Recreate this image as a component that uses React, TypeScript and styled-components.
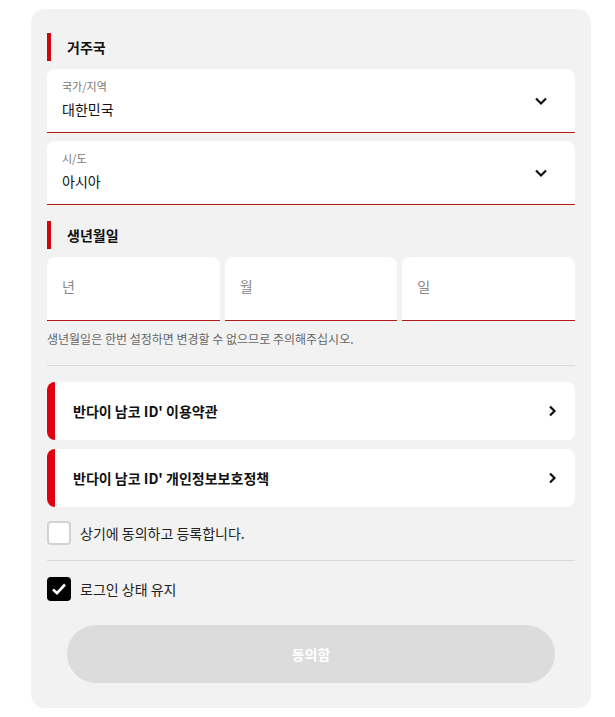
import React from "react";
import styled, { createGlobalStyle } from "styled-components";

const GlobalStyle = createGlobalStyle`
  body {
    margin: 0;
    background: #ffffff;
    font-family: "Noto Sans CJK KR", "Noto Sans", sans-serif;
    color: #111;
  }
`;

const Page = styled.div`
  padding: 9px 24px 10px 31px;
`;

const Card = styled.section`
  width: 560px;
  box-sizing: border-box;
  background: #f2f2f2;
  border-radius: 14px;
  padding: 24px 16px 25px;
  display: flex;
  flex-direction: column;
`;

const SectionTitle = styled.h2<{ $top?: number }>`
  margin: ${(p) => p.$top ?? 0}px 0 8px;
  height: 28px;
  display: flex;
  align-items: center;
  border-left: 4px solid #d0060f;
  padding-left: 16px;
  font-size: 14px;
  font-weight: 700;
  color: #111;
`;

const Select = styled.div`
  height: 64px;
  box-sizing: border-box;
  background: #fff;
  border-radius: 8px 8px 0 0;
  border-bottom: 1px solid #b51a1a;
  padding: 0 15px;
  display: flex;
  align-items: center;
  justify-content: space-between;
  & + & {
    margin-top: 8px;
  }
`;

const SelectText = styled.div`
  align-self: flex-start;
  padding-top: 9px;
  display: flex;
  flex-direction: column;
`;

const SelectLabel = styled.span`
  font-size: 11px;
  line-height: 16px;
  color: #777;
`;

const SelectValue = styled.span`
  font-size: 14px;
  line-height: 22px;
  margin-top: 4px;
  color: #111;
`;

const ChevronBox = styled.span`
  display: flex;
  margin-right: 12px;
`;

const DateRow = styled.div`
  display: grid;
  grid-template-columns: repeat(3, 1fr);
  gap: 5px;
`;

const DateField = styled.div`
  height: 64px;
  box-sizing: border-box;
  background: #fff;
  border-radius: 8px 8px 0 0;
  border-bottom: 1px solid #b51a1a;
  padding: 0 15px 5px;
  display: flex;
  align-items: center;
  font-size: 14px;
  color: #888;
`;

const Notice = styled.p`
  margin: 9px 0 0;
  font-size: 12px;
  line-height: 18px;
  color: #666;
`;

const Divider = styled.hr<{ $top: number; $bottom: number }>`
  border: none;
  border-top: 1px solid #dadada;
  margin: ${(p) => p.$top}px 0 ${(p) => p.$bottom}px;
`;

const TermsRow = styled.div`
  height: 58px;
  box-sizing: border-box;
  background: #fff;
  border-radius: 8px;
  border-left: 8px solid #e0000f;
  padding: 0 18px;
  display: flex;
  align-items: center;
  justify-content: space-between;
  font-size: 14px;
  font-weight: 700;
  color: #111;
  & + & {
    margin-top: 9px;
  }
`;

const CheckRow = styled.label<{ $top?: number }>`
  display: flex;
  align-items: center;
  gap: 9px;
  margin-top: ${(p) => p.$top ?? 0}px;
  font-size: 14px;
  line-height: 20px;
  color: #222;
`;

const CheckBox = styled.span<{ $checked?: boolean }>`
  width: 24px;
  height: 24px;
  box-sizing: border-box;
  border-radius: 4px;
  border: ${(p) => (p.$checked ? "none" : "2px solid #d2d2d2")};
  background: ${(p) => (p.$checked ? "#000" : "#fff")};
  display: flex;
  align-items: center;
  justify-content: center;
`;

const AgreeButton = styled.button`
  margin: 24px 20px 0;
  height: 58px;
  border: none;
  border-radius: 29px;
  background: #dcdcdc;
  color: #fff;
  font-family: inherit;
  font-size: 14px;
  font-weight: 700;
`;

const ChevronDown = () => (
  <svg width="14" height="10" viewBox="0 0 14 10">
    <path d="M2 2.5 L7 7.5 L12 2.5" fill="none" stroke="#111" strokeWidth="2.2" />
  </svg>
);

const ChevronRight = () => (
  <svg width="10" height="14" viewBox="0 0 10 14">
    <path d="M3 2.5 L7.5 7 L3 11.5" fill="none" stroke="#111" strokeWidth="2.2" />
  </svg>
);

const Check = () => (
  <svg width="18" height="18" viewBox="0 0 18 18">
    <path d="M3 9.5 L7 13.2 L15 4.5" fill="none" stroke="#fff" strokeWidth="2.6" />
  </svg>
);

const selects = [
  { label: "국가/지역", value: "대한민국" },
  { label: "시/도", value: "아시아" },
];

const terms = ["반다이 남코 ID' 이용약관", "반다이 남코 ID' 개인정보보호정책"];

export default function App() {
  return (
    <Page>
      <GlobalStyle />
      <Card>
        <SectionTitle>거주국</SectionTitle>
        {selects.map((s) => (
          <Select key={s.label}>
            <SelectText>
              <SelectLabel>{s.label}</SelectLabel>
              <SelectValue>{s.value}</SelectValue>
            </SelectText>
            <ChevronBox>
              <ChevronDown />
            </ChevronBox>
          </Select>
        ))}
        <SectionTitle $top={16}>생년월일</SectionTitle>
        <DateRow>
          <DateField>년</DateField>
          <DateField>월</DateField>
          <DateField>일</DateField>
        </DateRow>
        <Notice>생년월일은 한번 설정하면 변경할 수 없으므로 주의해주십시오.</Notice>
        <Divider $top={17} $bottom={16} />
        {terms.map((t) => (
          <TermsRow key={t}>
            <span>{t}</span>
            <ChevronRight />
          </TermsRow>
        ))}
        <CheckRow $top={14}>
          <CheckBox />
          상기에 동의하고 등록합니다.
        </CheckRow>
        <Divider $top={15} $bottom={16} />
        <CheckRow>
          <CheckBox $checked>
            <Check />
          </CheckBox>
          로그인 상태 유지
        </CheckRow>
        <AgreeButton>동의함</AgreeButton>
      </Card>
    </Page>
  );
}
